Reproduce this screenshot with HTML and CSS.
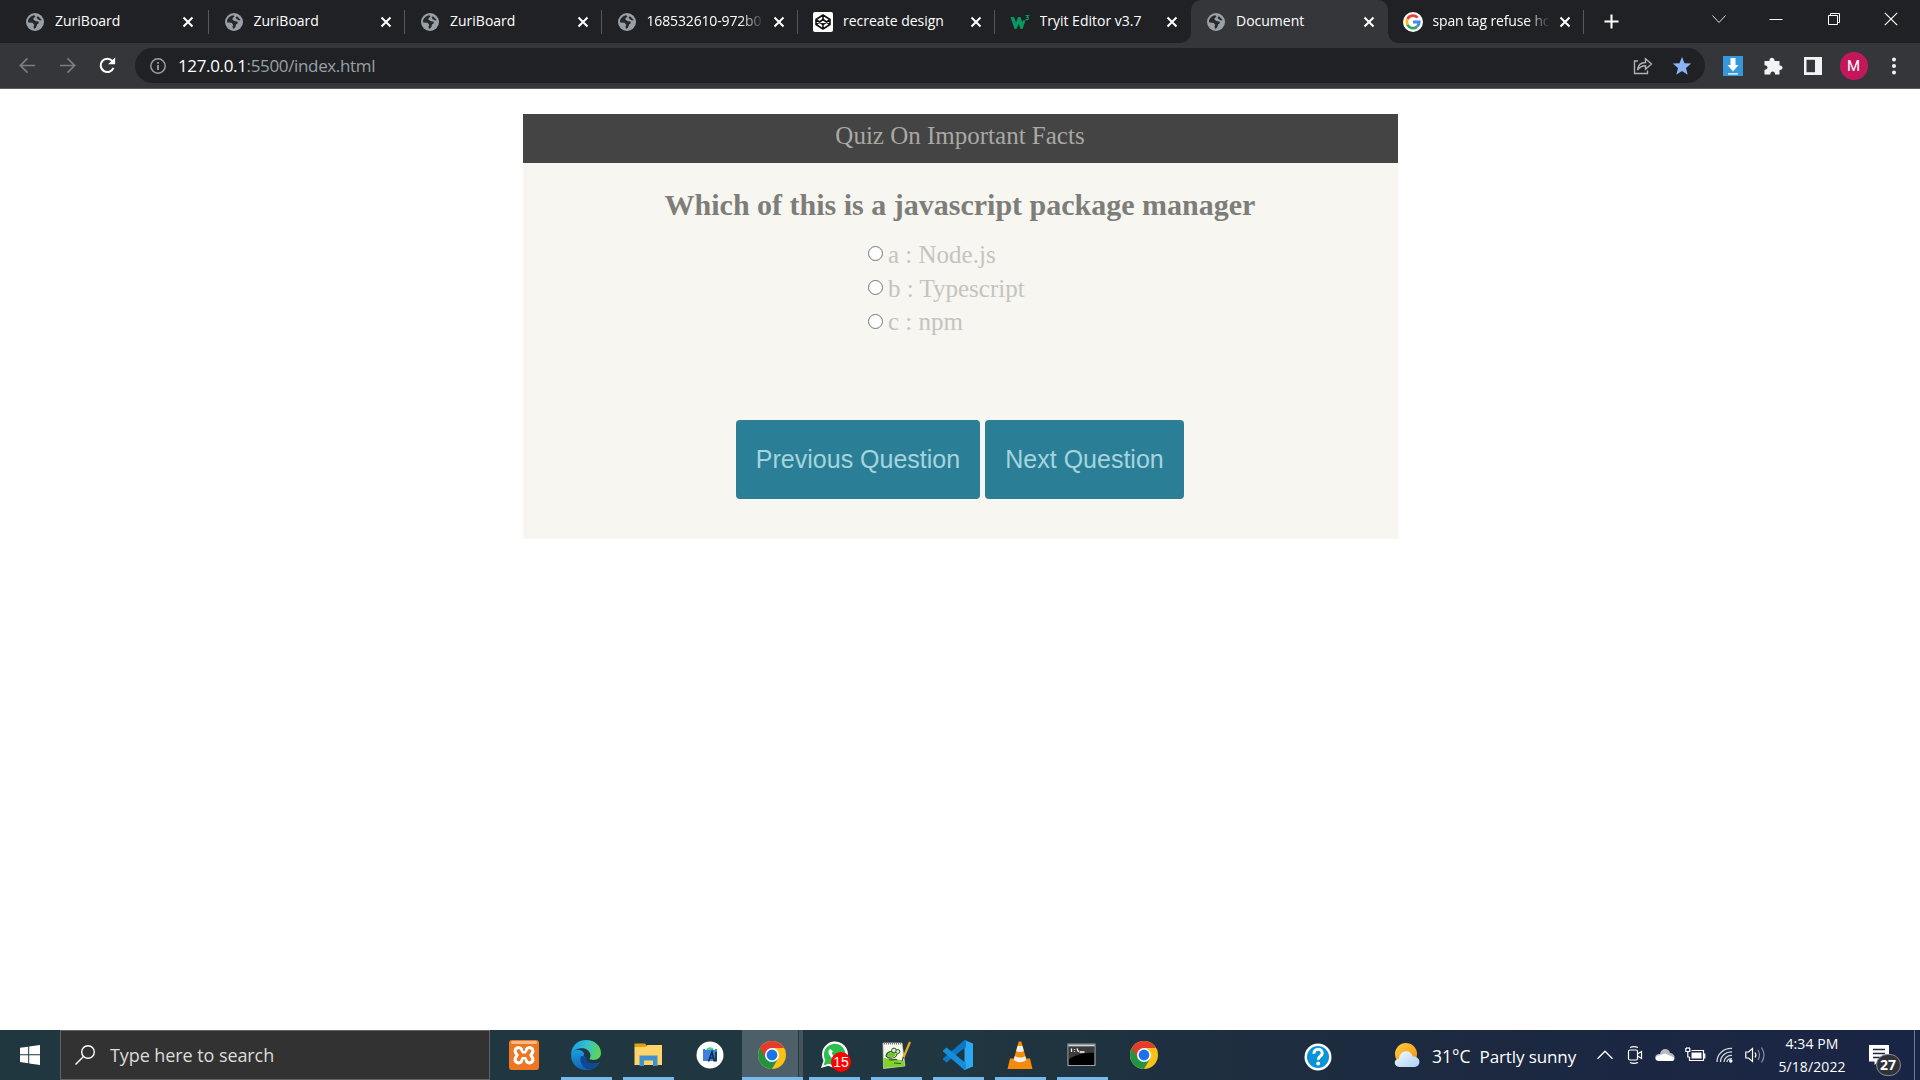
FILE: index.html
```html
<!DOCTYPE html>
<html lang="en">
<head>
<meta charset="utf-8">
<title>Document</title>
<link rel="stylesheet" href="styles.css">
</head>
<body>
<svg class="defs" width="0" height="0">
  <symbol id="globe" viewBox="0 0 18 18"><circle cx="9" cy="9" r="9" fill="#9aa0a6"/><path d="M2 7.500C3 4.500 5 2.600 8.500 2.200L9.500 3.500 7.500 5.200 7.600 6.800 10 8.200 12.500 8.500 12.800 10.200 11 11.500 10.200 14.500 8 16 7.500 13.600 8.300 12 6.500 9.700 2.200 9.500Z" fill="#26282b"/><path d="M12 3.300 15.700 7 14 7.500 11.500 6 10.500 4.500Z" fill="#26282b"/></symbol>
  <symbol id="x" viewBox="0 0 12 12"><path d="M1.500 1.500 10.500 10.500M10.500 1.500 1.500 10.500" stroke="#fff" stroke-width="2" fill="none"/></symbol>
  <symbol id="chrome" viewBox="0 0 28 28"><circle cx="14" cy="14" r="14" fill="#fbc116"/><path d="M1.880 7A14 14 0 0 0 14 28L20.060 17.500 14 14Z" fill="#229342"/><path d="M1.880 7 7.940 17.500 14 14 14 7H26.120A14 14 0 0 0 1.880 7Z" fill="#e33b2e"/><circle cx="14" cy="14" r="7" fill="#fff"/><circle cx="14" cy="14" r="5.400" fill="#1a73e8"/></symbol>
</svg>
<header class="tabs">
  <div class="tab first"><svg class="fav"><use href="#globe"/></svg><span class="name">ZuriBoard</span><svg class="close"><use href="#x"/></svg></div>
  <div class="tab"><svg class="fav"><use href="#globe"/></svg><span class="name">ZuriBoard</span><svg class="close"><use href="#x"/></svg></div>
  <div class="tab"><svg class="fav"><use href="#globe"/></svg><span class="name">ZuriBoard</span><svg class="close"><use href="#x"/></svg></div>
  <div class="tab"><svg class="fav"><use href="#globe"/></svg><span class="name fade">168532610-972b0</span><svg class="close"><use href="#x"/></svg></div>
  <div class="tab"><svg class="fav big" viewBox="0 0 20 20"><rect width="20" height="20" rx="2" fill="#fff"/><path d="M10 3 17 7.500V12.500L10 17 3 12.500V7.500ZM10 3V7.500M10 12.500V17M3 7.500 10 12.500 17 7.500M3 12.500 10 7.500 17 12.500" fill="none" stroke="#111" stroke-width="1.600" stroke-linejoin="round"/></svg><span class="name">recreate design</span><svg class="close"><use href="#x"/></svg></div>
  <div class="tab noline"><svg class="fav big" viewBox="0 0 20 20"><path d="M.5 5H4L6 10.500 8 5H10.500L12.300 10 13.500 8 15.500 8.500 12.500 17H10.500L8.800 12 6.500 17H4.500Z" fill="#059862"/><path d="M15.500 3.500H18.500L17 5.200C18.500 5 19 7.500 17 7.800L15.500 7.300" fill="none" stroke="#059862" stroke-width="1.200"/></svg><span class="name">Tryit Editor v3.7</span><svg class="close"><use href="#x"/></svg></div>
  <div class="tab active"><svg class="fav"><use href="#globe"/></svg><span class="name">Document</span><svg class="close"><use href="#x"/></svg></div>
  <div class="tab"><svg class="fav big" viewBox="0 0 20 20"><circle cx="10" cy="10" r="10" fill="#fff"/><g fill="none" stroke-width="2.800"><path d="M14.600 5.600A6.200 6.200 0 0 0 4.500 7.200" stroke="#ea4335"/><path d="M4.500 7.200A6.200 6.200 0 0 0 4.500 12.900" stroke="#fbbc05"/><path d="M4.500 12.900A6.200 6.200 0 0 0 14 14.700" stroke="#34a853"/><path d="M10 10H16.200A6.200 6.200 0 0 1 14 14.700" stroke="#4285f4"/></g></svg><span class="name fade">span tag refuse ho</span><svg class="close"><use href="#x"/></svg></div>
  <svg class="plus" viewBox="0 0 16 16"><path d="M8 .5V15.500M.5 8H15.500" stroke="#fff" stroke-width="2.200"/></svg>
  <div class="wincontrols">
    <svg viewBox="0 0 14 14"><path d="M.5 3.500 7 10.500 13.500 3.500" fill="none" stroke="#ddd"/></svg>
    <svg viewBox="0 0 14 14"><path d="M.5 7.500H13.500" stroke="#fff"/></svg>
    <svg viewBox="0 0 14 14"><path d="M1.500 3.500H10.500V12.500H1.500ZM3.500 3.500V1.500H12.500V10.500H10.500" fill="none" stroke="#fff"/></svg>
    <svg viewBox="0 0 14 14"><path d="M.8 .8 13.200 13.200M13.200 .8 .8 13.200" stroke="#fff" stroke-width="1.200"/></svg>
  </div>
</header>
<nav class="toolbar">
  <svg class="nav" viewBox="0 0 20 20"><path d="M18 10H3M10 2.500 2.500 10 10 17.500" fill="none" stroke="#7b7d80" stroke-width="1.800"/></svg>
  <svg class="nav" viewBox="0 0 20 20"><path d="M2 10H17M10 2.500 17.500 10 10 17.500" fill="none" stroke="#7b7d80" stroke-width="1.800"/></svg>
  <svg class="nav" viewBox="0 0 20 20"><path d="M16.300 12.500A7 7 0 1 1 15 5.100L16.500 6.800" fill="none" stroke="#fff" stroke-width="2.200"/><path d="M18 1.500V8.800H10.700Z" fill="#fff"/></svg>
  <div class="omnibox">
    <svg class="info" viewBox="0 0 16 16"><circle cx="8" cy="8" r="7.200" fill="none" stroke="#9aa0a6" stroke-width="1.500"/><path d="M8 7V12M8 4V5.800" stroke="#9aa0a6" stroke-width="1.800"/></svg>
    <span class="url"><b>127.0.0.1</b>:5500/index.html</span>
    <svg class="share" viewBox="0 0 20 18"><path d="M5 4H1.500V16.500H14.500V13.500M4.500 13C5 8 8 5.500 12.500 5.500V1.800L18.500 7 12.500 12.200V8.800C9 8.800 6.500 10 4.500 13Z" fill="none" stroke="#aeb1b5" stroke-width="1.400"/></svg>
    <svg class="star" viewBox="0 0 20 20"><path d="M10 .8 12.500 7.200 19.200 7.600 14 12 15.700 18.700 10 15 4.300 18.700 6 12 .8 7.600 7.500 7.200Z" fill="#8ab4f8"/></svg>
  </div>
  <div class="exts">
    <svg viewBox="0 0 20 20"><rect width="20" height="20" fill="#3498db"/><path d="M7.500 2H12.500V9H15.500L10 15.500 4.500 9H7.500ZM5 17.200H15V18.500H5Z" fill="#fff"/></svg>
    <svg viewBox="0 0 20 20"><path d="M1.500 5H6.500C5.800 .5 12 .5 11.500 5H16.500V9.500C20.500 9 20.500 14.500 16.500 14V18.500H12C12.500 14.500 7 14.500 7.300 18.500H1.500V13.800C5.500 14 5.500 9 1.500 9.200Z" fill="#f1f3f4"/></svg>
    <svg viewBox="0 0 20 20"><path d="M1 1H19V19H1Z" fill="#f1f3f4"/><path d="M3.500 3.800H12V16.200H3.500Z" fill="#35363a"/></svg>
    <span class="avatar">M</span>
    <svg viewBox="0 0 20 20"><g fill="#f1f3f4"><circle cx="10" cy="3.500" r="2"/><circle cx="10" cy="10" r="2"/><circle cx="10" cy="16.500" r="2"/></g></svg>
  </div>
</nav>
<main class="page">
  <section class="quiz">
    <h1 class="quiz-title">Quiz On Important Facts</h1>
    <h2 class="question">Which of this is a javascript package manager</h2>
    <div class="options">
      <label><i class="radio"></i><span>a : Node.js</span></label>
      <label><i class="radio"></i><span>b : Typescript</span></label>
      <label><i class="radio"></i><span>c : npm</span></label>
    </div>
    <div class="actions">
      <button class="btn prev">Previous Question</button>
      <button class="btn next">Next Question</button>
    </div>
  </section>
</main>
<footer class="taskbar">
  <div class="start"><svg viewBox="0 0 20 20"><path d="M0 2.800 8.200 1.700V9.300H0ZM9.200 1.500 20 0V9.300H9.200ZM0 10.300H8.200V18.200L0 17.100ZM9.200 10.300H20V20L9.200 18.400Z" fill="#fff"/></svg></div>
  <div class="search"><svg viewBox="0 0 20 20"><circle cx="13" cy="7" r="6.300" fill="none" stroke="#fff" stroke-width="1.400"/><path d="M8.500 11.500 .5 19.500" stroke="#fff" stroke-width="1.400"/></svg><span>Type here to search</span></div>
  <div class="apps">
    <div class="app"><svg viewBox="0 0 30 30"><rect width="30" height="30" rx="3" fill="#ee7623"/><rect x="2" y="1" width="26" height="3" rx="1.500" fill="#f8b98a"/><g fill="none" stroke-linecap="round" stroke-linejoin="round"><path d="M9.500 11 12 15.200 9.500 19.500M20.500 11 18 15.200 20.500 19.500M12 15.200H18" stroke="#fff" stroke-width="10"/><path d="M9.500 11 12 15.200 9.500 19.500M20.500 11 18 15.200 20.500 19.500M12 15.200H18" stroke="#ee7623" stroke-width="3.600"/><path d="M15 6V10.500M15 20V24.500" stroke="#ee7623" stroke-width="1.600"/></g></svg></div>
    <div class="app run"><svg viewBox="0 0 30 30"><defs><linearGradient id="eg" x1="0" y1=".3" x2="1" y2=".5"><stop offset="0" stop-color="#1b9de2"/><stop offset=".5" stop-color="#35c1d0"/><stop offset="1" stop-color="#5fd84b"/></linearGradient><linearGradient id="eb" x1="0" y1="0" x2="0" y2="1"><stop offset="0" stop-color="#1b9de2"/><stop offset="1" stop-color="#1264b4"/></linearGradient></defs><path d="M0 15C0 25 8 31 17 30 22 29.500 26 27 28.500 22.500 24 25 11 25 13 13 9 7 0 10 0 15Z" fill="url(#eb)"/><path d="M10 16C7.500 23 13 30 19 29.500 24 28.500 27 25 28.500 22.500 25 25 15 24.500 15 16.500Z" fill="#0d4a96"/><path d="M0 14C1 4 8 0 15 0 24 0 30 6 30 13 30 19 24 21 19.500 19.500 17.500 18.500 20 17.500 19.500 14.500 17 5.500 4 7 0 14Z" fill="url(#eg)"/></svg></div>
    <div class="app run"><svg viewBox="0 0 30 30"><path d="M1.500 3.500H12L14.500 7H1.500Z" fill="#dda10f"/><path d="M1.500 7H12L14.500 5H29V25H1.500Z" fill="#ffd569"/><path d="M6.500 26V15.500H24.500V26H20V20.500H11V26Z" fill="#4190cf"/></svg></div>
    <div class="app"><svg viewBox="0 0 30 30"><circle cx="15" cy="15" r="13.500" fill="#fff"/><path d="M11 10.500C11.500 6 18.500 6 19 10.500Z" fill="#3ddc84"/><path d="M8 9H10V10H20V9H22V21H8Z" fill="#3f7fe0"/><path d="M13.500 21.500 17 12 19.500 21.500M15 18H19M21 12V21.500" fill="none" stroke="#073042" stroke-width="1.600"/></svg></div>
    <div class="app run current"><svg class="sm"><use href="#chrome"/></svg></div>
    <div class="app run"><svg viewBox="0 0 30 30"><path d="M2 28 4.500 20.500A13 13 0 1 1 9.500 25.700Z" fill="#fff"/><path d="M4.500 25.500 6.300 20A10.800 10.800 0 1 1 10 23.800Z" fill="#2bc04e"/><path d="M11.500 9C8 9.500 9 16 15 19.500 19 22 21.500 19 21 17L17.500 15.500 16 17C13.500 15.500 13 14 12.700 13L14 11.500Z" fill="#fff"/></svg><span class="count">15</span></div>
    <div class="app run"><svg viewBox="0 0 30 30"><path d="M2 3H21L24 26 2.500 28.500Z" fill="#f5f7ea" stroke="#c4c7c0" stroke-width=".7"/><path d="M3 3.500H20" stroke="#777" stroke-width="2" stroke-dasharray="1 1"/><path d="M2.500 18 23 20.500 23.800 26 2.800 28Z" fill="#83d22c"/><path d="M5 16C6 11 11 11 12 12.500M5 16C8 19 15 19 16 14M6 14.500H12M8 19.500C12 21 14 18 16 20M13 23 20 23.500" fill="none" stroke="#2f5426" stroke-width="1.200"/><path d="M6 15.500C7 11.500 13 11.500 15 14 14 18 8 18 6 15.500Z" fill="#6fc52e"/><circle cx="13" cy="10.500" r="2.400" fill="#d9efc4" stroke="#2f5426"/><circle cx="16.800" cy="11.500" r="2" fill="#d9efc4" stroke="#2f5426"/><path d="M29 2 22 18.500" stroke="#e9a927" stroke-width="2.200"/><path d="M22.500 17 21 21" stroke="#333"/></svg></div>
    <div class="app run"><svg viewBox="0 0 30 30"><path d="M21.500 0 30 3.500V26.500L21.500 30Z" fill="#2aa8f2"/><path d="M22 7.500 3.500 22.500 0 19.500V18.500L21.500 0H23V7.500Z" fill="#0b79c8"/><path d="M22 22.500 3.500 7.500 0 10.500V11.500L21.500 30H23V22.500Z" fill="#168fdb"/></svg></div>
    <div class="app run"><svg viewBox="0 0 30 30"><path d="M5 18.500H25L27.500 29H2.500Z" fill="#f58a0b"/><path d="M13.700 1.500H16.300L21.500 20C19 23 11 23 8.500 20Z" fill="#f58a0b"/><path d="M12.500 6H17.500L18.800 11C17 12.300 13 12.300 11.200 11ZM9.800 16C12 18 18 18 20.200 16L21.300 20C18 23 12 23 8.700 20Z" fill="#eeeeec"/></svg></div>
    <div class="app run"><svg viewBox="0 0 30 30"><path d="M1 4H28V25.500H1Z" fill="#000" stroke="#9ba1a5" stroke-width="1.200"/><path d="M1.500 4.500H27.500V6.500H1.500Z" fill="#d2d6d8"/><path d="M2 7H27V13C20 12 10 14 2 19Z" fill="#3b3b3b"/><path d="M4.500 8.500V12M7.500 9V9.800M7.500 11.300V12M10 8.500 11.500 12M12.500 12H17.500" stroke="#fff" stroke-width="1.300"/></svg></div>
    <div class="app"><svg class="sm"><use href="#chrome"/></svg></div>
  </div>
  <svg class="help" viewBox="0 0 28 28"><circle cx="14" cy="14" r="13.500" fill="#fff"/><circle cx="14" cy="14" r="11" fill="#0a93d8"/><path d="M9.800 10.800C9.800 4.500 18.500 5 18.200 10.300 18 13.500 14.200 13 14.200 16.800" fill="none" stroke="#fff" stroke-width="3"/><circle cx="14.200" cy="20.500" r="1.900" fill="#fff"/></svg>
  <svg class="weather" viewBox="0 0 26 26"><defs><linearGradient id="sun" x1="0" y1="0" x2="1" y2="1"><stop offset="0" stop-color="#ffcf3f"/><stop offset="1" stop-color="#f58a12"/></linearGradient><linearGradient id="cl" x1="0" y1="0" x2="1" y2="1"><stop offset="0" stop-color="#f4faff"/><stop offset="1" stop-color="#a9d2f5"/></linearGradient></defs><circle cx="12" cy="12" r="11" fill="url(#sun)"/><path d="M5.500 25C-1 24.500-.5 16.500 5 17 5.500 7.500 17 7 18.500 14.500 27.500 14 27.500 25 20 25Z" fill="url(#cl)"/></svg>
  <span class="temp">31°C</span><span class="sky">Partly sunny</span>
  <div class="tray">
    <svg viewBox="0 0 20 20"><path d="M2.500 13.800 10 6.200 17.500 13.800" fill="none" stroke="#fff" stroke-width="1.300"/></svg>
    <svg viewBox="0 0 20 20"><g fill="none" stroke="#fff" stroke-width="1.200"><rect x="3.500" y="5" width="9" height="10" rx="1.500"/><path d="M12.500 9 16.500 6.500V13.500L12.500 11M5 2.500Q9 .8 13 2.500M5 17.500Q9 19.200 13 17.500"/></g></svg>
    <svg viewBox="0 0 20 20"><path d="M1 15C-1 11 1.500 8.500 5 9 6 2.500 14 2.500 15 8 19.500 8.500 21 13 18 15Z" fill="#b5bac3"/><path d="M3 16C-.5 15 0 11 4 10.500L10 8.500 19 12.500C20 14 19 16 17 16Z" fill="#fff"/></svg>
    <svg viewBox="0 0 20 20"><path d="M6.500 5.500H18.500V15.500H4.500V12M18.500 9H19.800V13H18.500M.8 3V6.500H4.800V3M2.800 6.500V12H4.500M2 2V4M4 2V4" fill="none" stroke="#fff" stroke-width="1.200"/><path d="M6.500 7.500H16.500V13.500H6.500Z" fill="#fff"/></svg>
    <svg viewBox="0 0 20 20"><g fill="none" stroke="#d3d6dc" stroke-width="1.300"><path d="M2 17C2 9 9 3 17 3.500M5.500 17C5.500 11 11 6.500 17 7M9 17C9 13.500 12.500 10 17 10.500M12 17C12 15 14 13.500 17 13.700"/></g><circle cx="15.800" cy="16" r="1.700" fill="#fff"/></svg>
    <svg viewBox="0 0 20 20"><path d="M.8 7H3.500L7.500 3.500V16.500L3.500 13H.8Z" fill="none" stroke="#fff" stroke-width="1.200"/><path d="M10 7.500Q11.800 10 10 12.500" fill="none" stroke="#fff" stroke-width="1.200"/><path d="M13 5Q16 10 13 15M16.500 2.500Q21.500 10 16.500 17.500" fill="none" stroke="#8990a0" stroke-width="1.200"/></svg>
  </div>
  <div class="clock"><span class="time">4:34 PM</span><span class="date">5/18/2022</span></div>
  <div class="notes"><svg viewBox="0 0 20 20"><path d="M0 0H20V16.500H9L5.500 20V16.500H0Z" fill="#fff"/><path d="M4 4.500H16M4 8.500H16M4 12.500H11" stroke="#1b2840" stroke-width="1.300"/></svg><span class="badge">27</span></div>
</footer>
</body>
</html>
```
FILE: styles.css
```css
* { box-sizing: border-box; }
html, body { height: 100%; }
body { margin: 0; display: flex; flex-direction: column; overflow: hidden; background: #fff; font-family: "Open Sans", "Noto Sans", sans-serif; }
svg { display: block; flex: none; overflow: visible; }
.defs { position: absolute; }

.tabs { height: 43px; flex: none; display: flex; background: #202124; padding-left: 11px; }
.tab { position: relative; width: 196.500px; height: 43px; flex: none; display: flex; align-items: center; padding-left: 16px; }
.tab.first { width: 197.500px; padding-left: 15px; }
.tab::after { content: ""; position: absolute; right: 0; top: 10px; width: 1px; height: 24px; background: #55575b; }
.tab.noline::after { display: none; }
.fav { width: 18px; height: 18px; margin-right: 11px; }
.fav.big { width: 20px; height: 20px; margin: 0 10px 0 -1px; }
.name { width: 116px; color: #fff; font-size: 14px; line-height: 20px; white-space: nowrap; overflow: hidden; margin-top: -2px; }
.fade { letter-spacing: -.15px; -webkit-mask-image: linear-gradient(90deg, #000 94px, transparent 117px); mask-image: linear-gradient(90deg, #000 94px, transparent 117px); }
.close { width: 12px; height: 12px; margin-left: 10.500px; }
.tab.active { background: #35363a; border-radius: 10px 10px 0 0; }
.tab.active::before, .tab.active::after { content: ""; position: absolute; top: auto; bottom: 0; width: 10px; height: 10px; background: radial-gradient(circle at 0 0, transparent 9.500px, #35363a 10px); }
.tab.active::before { left: -10px; }
.tab.active::after { right: -10px; background: radial-gradient(circle at 100% 0, transparent 9.500px, #35363a 10px); }
.plus { width: 15px; height: 15px; margin: 14px 0 0 19.500px; }
.wincontrols { margin: 11.500px 22px 0 auto; display: flex; gap: 43.300px; }
.wincontrols svg { width: 14px; height: 14px; }

.toolbar { height: 46px; flex: none; display: flex; align-items: center; background: #35363a; border-bottom: 1px solid #5b5c60; padding-left: 18px; }
.nav { width: 19px; height: 19px; margin-right: 21px; }
.omnibox { width: 1570px; height: 35px; border-radius: 18px; background: #202124; display: flex; align-items: center; padding-left: 14.500px; margin-left: -3px; }
.info { width: 16px; height: 16px; margin-right: 12.500px; }
.url { font-size: 17px; line-height: 24px; color: #9aa0a6; letter-spacing: -.35px; }
.url b { font-weight: 400; color: #fff; }
.share { width: 20px; height: 18px; margin-left: auto; }
.star { width: 20px; height: 20px; margin: 0 13px 0 19px; }
.exts { display: flex; align-items: center; gap: 20px; margin-left: 17.500px; }
.exts svg { width: 20px; height: 20px; }
.avatar { width: 28px; height: 28px; border-radius: 50%; background: #c2185b; color: #fff; font: 15px/28px Roboto, sans-serif; text-align: center; margin: 0 -4px 0 -3px; }

.page { flex: 1; padding-top: 25px; }
.quiz { width: 875px; height: 425px; margin: 0 auto; background: #f7f6f0; font-family: "Liberation Serif", serif; }
.quiz-title { margin: 0; height: 49px; background: #444; color: #a9a9a5; font-size: 25px; line-height: 44px; font-weight: 400; text-align: center; }
.question { margin: 24px 0 0; font-size: 30px; line-height: 36px; color: #7d7d79; text-align: center; }
.options { margin: 15px 0 0 345px; }
.options label { display: flex; align-items: center; height: 33.750px; color: #c4c4c0; font-size: 25px; }
.radio { width: 15px; height: 15px; border: 1.250px solid #767676; border-radius: 50%; background: #fff; margin: 0 5.500px 2px 0; }
.actions { display: flex; gap: 5px; margin: 81px 0 0 213.500px; }
.btn { height: 79px; padding: 0; border: 0; border-radius: 4px; background: #2a7f97; color: #a5d4de; font: 25px "Liberation Sans", Arial, sans-serif; }
.prev { width: 244px; }
.next { width: 199px; }

.taskbar { height: 50px; flex: none; display: flex; align-items: center; background: linear-gradient(90deg, #203740 0, #203640 50%, #1d2b3f 70%, #1b2742 85%, #192544 100%); color: #fff; }
.start { width: 60px; padding-left: 20px; }
.start svg { width: 20px; height: 20px; }
.search { width: 430px; height: 50px; border: 1px solid #636363; background: #323232; display: flex; align-items: center; padding-left: 14px; color: #dcdcdc; font-size: 18px; letter-spacing: -.08px; }
.search svg { width: 20px; height: 20px; margin-right: 15px; }
.apps { display: flex; margin-left: 3px; }
.app { position: relative; width: 62px; height: 50px; display: flex; align-items: center; justify-content: center; }
.app svg { width: 30px; height: 30px; }
.app svg.sm { width: 28px; height: 28px; }
.run::after { content: ""; position: absolute; left: 6px; bottom: 0; width: 51px; height: 3px; background: #76b9ed; }
.current { background: linear-gradient(90deg, transparent 1px, #4d5f69 1px, #4d5f69 57px, #28383f 57px, #28383f 58px, #44535c 58px); }
.current::after { left: 1px; width: 61px; }
.count { position: absolute; left: 28px; top: 22px; width: 20px; height: 20px; border-radius: 50%; background: #f00; font: 14px/20px "Liberation Sans", sans-serif; text-align: center; }
.help { width: 28px; height: 28px; margin: 3px 0 0 129px; }
.weather { width: 26px; height: 26px; margin-left: 62px; }
.temp, .sky { font-size: 17px; white-space: nowrap; margin-top: 2px; }
.temp { width: 47.500px; margin-left: 12px; font-size: 17.500px; }
.sky { width: 115.500px; letter-spacing: -.1px; }
.tray { display: flex; gap: 10px; }
.tray svg { width: 20px; height: 20px; }
.clock { width: 92px; display: flex; flex-direction: column; align-items: center; padding-left: 2px; font-size: 14px; line-height: 23px; letter-spacing: .1px; }
.notes { position: relative; margin-left: 11.500px; }
.notes svg { width: 20px; height: 20px; }
.badge { position: absolute; left: 7px; top: 9px; width: 25px; height: 22px; border: 1px solid #8a8d93; border-radius: 11px; background: #303237; font-size: 14px; font-weight: 700; line-height: 19px; text-align: center; }
.taskbar::after { content: ""; width: 1px; height: 50px; background: #737b8c; margin-left: 25px; }
```
